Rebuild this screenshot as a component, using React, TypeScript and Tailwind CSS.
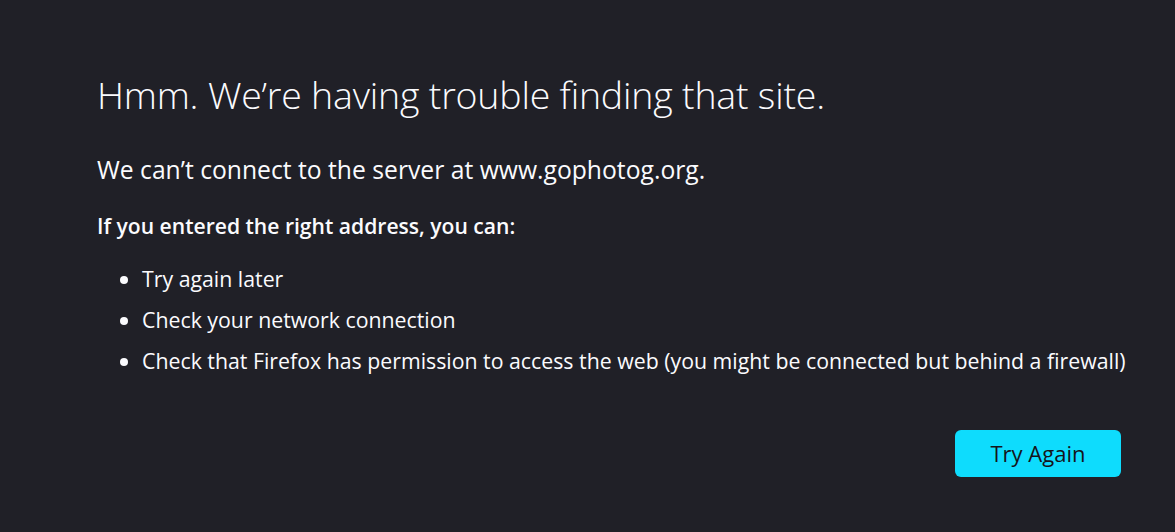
export default function App() {
  const items = [
    "Try again later",
    "Check your network connection",
    "Check that Firefox has permission to access the web (you might be connected but behind a firewall)",
  ];

  return (
    <div className="min-h-[532px] w-full bg-[#202027] text-[#fbfbfe] font-['Open_Sans',sans-serif]">
      <div className="ml-[97px] w-[1024px] pt-[69px]">
        <h1 className="text-[37.5px] leading-[52px] font-light tracking-[-0.2px]">
          Hmm. We’re having trouble finding that site.
        </h1>
        <p className="mt-[32px] text-[24.7px] leading-[34px]">
          We can’t connect to the server at www.gophotog.org.
        </p>
        <p className="mt-[24px] text-[21.1px] leading-[30px] font-semibold">
          If you entered the right address, you can:
        </p>
        <ul className="mt-[17px] pl-[45px] list-disc text-[21.3px]">
          {items.map((item) => (
            <li key={item} className="h-[41px] leading-[41px] whitespace-nowrap">
              {item}
            </li>
          ))}
        </ul>
        <div className="mt-[49px] flex justify-end">
          <button className="h-[47px] w-[166px] rounded-[6px] bg-[#0edcfd] text-[22px] text-[#15141a]">
            Try Again
          </button>
        </div>
      </div>
    </div>
  );
}
